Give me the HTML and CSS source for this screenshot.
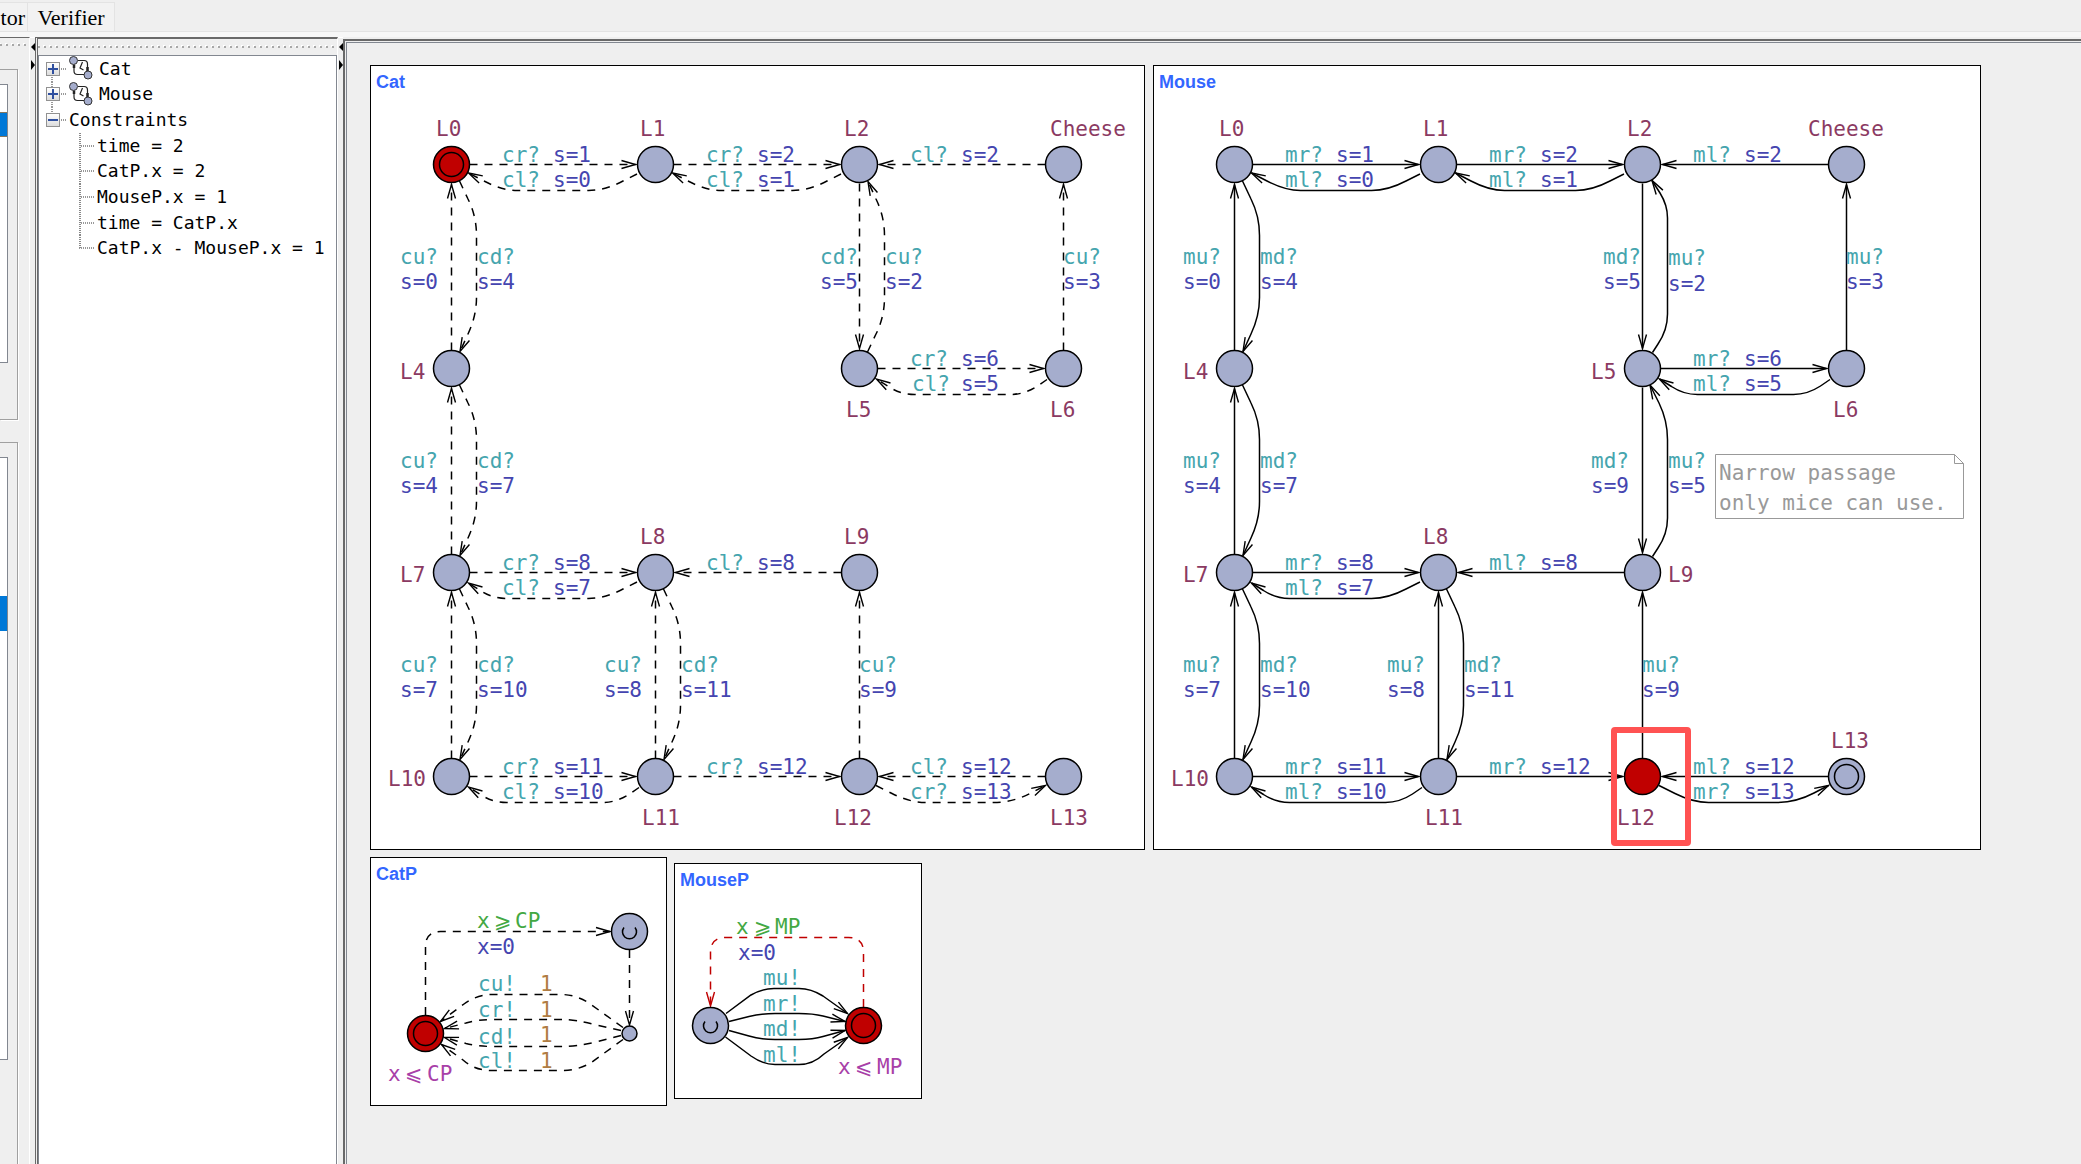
FILE: index.html
```
<!DOCTYPE html>
<html lang="en">
<head>
<meta charset="utf-8">
<title>Simulator</title>
<link rel="stylesheet" href="styles.css">
</head>
<body>
<svg class="shapes" width="0" height="0" aria-hidden="true">
  <defs>
    <marker id="head" markerUnits="userSpaceOnUse" markerWidth="18" markerHeight="12" refX="15" refY="6" orient="auto"><path d="M1 2 L15 6 L1 10" fill="none" stroke="#000" stroke-width="1.4"/></marker>
    <marker id="head-active" markerUnits="userSpaceOnUse" markerWidth="18" markerHeight="12" refX="15" refY="6" orient="auto"><path d="M1 2 L15 6 L1 10" fill="none" stroke="#c00000" stroke-width="1.4"/></marker>
    <circle id="loc" r="18"/>
    <g id="init"><circle r="18"/><circle r="12"/></g>
    <g id="urgent"><circle r="18"/><path d="M-5.5 -4 A7 7 0 1 0 5.5 -4" fill="none"/></g>
    <path id="east" d="M18 0 H184"/>
    <path id="west" d="M186 0 H20"/>
    <path id="south" d="M0 19 V184"/>
    <path id="north" d="M0 186 V20"/>
    <path id="back" d="M185.5 9.5 L171.5 16.5 Q153.5 26 137 26 H66 Q50.5 26 32.5 16.5 L17 8.5"/>
    <path id="back-short" d="M185.5 9.5 L171.5 16.5 Q153.5 26 137 26 H55 Q41 26 29 18 L17 10.5"/>
    <path id="back-tight" d="M187.5 11 L178 17.5 Q165 26 151 26 H55 Q41 26 29 18 L17 10.5"/>
    <path id="fore" d="M16.5 9 L32.5 17 Q50.5 26 66 26 H134 Q153.5 26 171.5 16.5 L186 9"/>
    <path id="bow-down" d="M8 16.5 L16.5 34.5 Q25 51.5 25 71 V133 Q25 151.5 16.5 169.5 L8.5 187"/>
    <path id="bow-up" d="M8 187.5 L16.5 169.5 Q25 152.5 25 133 V71 Q25 52 16.5 34.5 L8.5 17"/>
    <path id="bow-up-tight" d="M10 188 L15.5 179.5 Q25 165.5 25 149.5 V53.5 Q25 40.5 17.5 28.5 L9.5 16"/>
    <path id="bow-up-low" d="M10 188 L15.5 179.5 Q25 165.5 25 149.5 V71 Q25 52 16.5 34.5 L7.5 16.5"/>
    <g id="automaton">
      <path d="M9 4.500 H15 Q18.500 4.500 18.500 8 V15 M5 8 V15 Q5 18.500 8.500 18.500 H15" fill="none" stroke="#222" stroke-width="1.200"/>
      <path d="M18.500 11 V15 M5 9 V12" stroke="#222" stroke-width="2.500"/>
      <path d="M13.500 6 L11 12 L14.500 14" fill="none" stroke="#222" stroke-width="1.200"/>
      <circle cx="4.500" cy="4.500" r="4" fill="#a5adcd" stroke="#333"/>
      <circle cx="19" cy="19" r="4" fill="#a5adcd" stroke="#333"/>
    </g>
  </defs>
</svg>

<nav class="tabs">
  <button class="tab tab-cut" type="button" aria-label="Simulator">tor</button>
  <button class="tab" type="button">Verifier</button>
</nav>

<div class="workspace">
  <aside class="controls">
    <div class="grip"></div>
    <section class="group group-top"><div class="list"><div class="selected"></div></div></section>
    <section class="group group-trace"><div class="list"><div class="selected"></div></div></section>
  </aside>
  <div class="divider">
    <button class="arrow arrow-left" type="button" aria-label="Collapse controls"></button>
    <button class="arrow arrow-right" type="button" aria-label="Expand controls"></button>
  </div>
  <aside class="variables">
    <div class="grip"></div>
    <div class="tree-view">
      <ul class="tree">
        <li class="node first"><button class="toggle plus" type="button" aria-label="Expand Cat"></button><span class="stub"></span><svg class="icon" viewBox="0 0 25 25"><use href="#automaton"/></svg>Cat</li>
        <li class="node"><button class="toggle plus" type="button" aria-label="Expand Mouse"></button><span class="stub"></span><svg class="icon" viewBox="0 0 25 25"><use href="#automaton"/></svg>Mouse</li>
        <li class="node last"><button class="toggle" type="button" aria-label="Collapse Constraints"></button><span class="stub"></span>Constraints</li>
        <li class="leaf"><span class="branch"></span>time = 2</li>
        <li class="leaf"><span class="branch"></span>CatP.x = 2</li>
        <li class="leaf"><span class="branch"></span>MouseP.x = 1</li>
        <li class="leaf"><span class="branch"></span>time = CatP.x</li>
        <li class="leaf"><span class="branch branch-end"></span>CatP.x - MouseP.x = 1</li>
      </ul>
    </div>
  </aside>
  <div class="divider">
    <button class="arrow arrow-left" type="button" aria-label="Collapse variables"></button>
    <button class="arrow arrow-right" type="button" aria-label="Expand variables"></button>
  </div>

  <main class="canvas">
    <section class="window window-cat">
      <h2>Cat</h2>
      <svg viewBox="0 28 773 755" width="773" height="755">
        <g class="edges dashed" marker-end="url(#head)">
          <use href="#east" x="80.5" y="98.5"/><use href="#back" x="80.5" y="98.5"/>
          <use href="#east" x="284.5" y="98.5"/><use href="#back" x="284.5" y="98.5"/>
          <use href="#west" x="488.5" y="98.5"/>
          <use href="#north" x="80.5" y="98.5"/><use href="#bow-down" x="80.5" y="98.5"/>
          <use href="#south" x="488.5" y="98.5"/><use href="#bow-up" x="488.5" y="98.5"/>
          <use href="#north" x="692.5" y="98.5"/>
          <use href="#east" x="488.5" y="302.5"/><use href="#back-tight" x="488.5" y="302.5"/>
          <use href="#north" x="80.5" y="302.5"/><use href="#bow-down" x="80.5" y="302.5"/>
          <use href="#east" x="80.5" y="506.5"/><use href="#back-short" x="80.5" y="506.5"/>
          <use href="#west" x="284.5" y="506.5"/>
          <use href="#north" x="80.5" y="506.5"/><use href="#bow-down" x="80.5" y="506.5"/>
          <use href="#north" x="284.5" y="506.5"/><use href="#bow-down" x="284.5" y="506.5"/>
          <use href="#north" x="488.5" y="506.5"/>
          <use href="#east" x="80.5" y="710.5"/><use href="#back-tight" x="80.5" y="710.5"/>
          <use href="#east" x="284.5" y="710.5"/>
          <use href="#west" x="488.5" y="710.5"/><use href="#fore" x="488.5" y="710.5"/>
        </g>
        <g class="locations">
          <use class="active" href="#init" x="80.5" y="98.5"/><use href="#loc" x="284.5" y="98.5"/><use href="#loc" x="488.5" y="98.5"/><use href="#loc" x="692.5" y="98.5"/>
          <use href="#loc" x="80.5" y="302.5"/><use href="#loc" x="488.5" y="302.5"/><use href="#loc" x="692.5" y="302.5"/>
          <use href="#loc" x="80.5" y="506.5"/><use href="#loc" x="284.5" y="506.5"/><use href="#loc" x="488.5" y="506.5"/>
          <use href="#loc" x="80.5" y="710.5"/><use href="#loc" x="284.5" y="710.5"/><use href="#loc" x="488.5" y="710.5"/><use href="#loc" x="692.5" y="710.5"/>
        </g>
        <g class="name">
          <text x="65" y="70">L0</text><text x="269" y="70">L1</text><text x="473" y="70">L2</text><text x="679" y="70">Cheese</text>
          <text x="29" y="313">L4</text><text x="475" y="351">L5</text><text x="679" y="351">L6</text>
          <text x="29" y="516">L7</text><text x="269" y="478">L8</text><text x="473" y="478">L9</text>
          <text x="17" y="720">L10</text><text x="271" y="759">L11</text><text x="463" y="759">L12</text><text x="679" y="759">L13</text>
        </g>
        <g class="sync">
          <text x="131" y="96">cr?</text><text x="131" y="121">cl?</text><text x="335" y="96">cr?</text><text x="335" y="121">cl?</text><text x="539" y="96">cl?</text>
          <text x="29" y="198">cu?</text><text x="106" y="198">cd?</text><text x="449" y="198">cd?</text><text x="514" y="198">cu?</text><text x="692" y="198">cu?</text>
          <text x="539" y="300">cr?</text><text x="541" y="325">cl?</text>
          <text x="29" y="402">cu?</text><text x="106" y="402">cd?</text>
          <text x="131" y="504">cr?</text><text x="131" y="529">cl?</text><text x="335" y="504">cl?</text>
          <text x="29" y="606">cu?</text><text x="106" y="606">cd?</text><text x="233" y="606">cu?</text><text x="310" y="606">cd?</text><text x="488" y="606">cu?</text>
          <text x="131" y="708">cr?</text><text x="131" y="733">cl?</text><text x="335" y="708">cr?</text><text x="539" y="708">cl?</text><text x="539" y="733">cr?</text>
        </g>
        <g class="update">
          <text x="182" y="96">s=1</text><text x="182" y="121">s=0</text><text x="386" y="96">s=2</text><text x="386" y="121">s=1</text><text x="590" y="96">s=2</text>
          <text x="29" y="223">s=0</text><text x="106" y="223">s=4</text><text x="449" y="223">s=5</text><text x="514" y="223">s=2</text><text x="692" y="223">s=3</text>
          <text x="590" y="300">s=6</text><text x="590" y="325">s=5</text>
          <text x="29" y="427">s=4</text><text x="106" y="427">s=7</text>
          <text x="182" y="504">s=8</text><text x="182" y="529">s=7</text><text x="386" y="504">s=8</text>
          <text x="29" y="631">s=7</text><text x="106" y="631">s=10</text><text x="233" y="631">s=8</text><text x="310" y="631">s=11</text><text x="488" y="631">s=9</text>
          <text x="182" y="708">s=11</text><text x="182" y="733">s=10</text><text x="386" y="708">s=12</text><text x="590" y="708">s=12</text><text x="590" y="733">s=13</text>
        </g>
      </svg>
    </section>

    <section class="window window-mouse">
      <h2>Mouse</h2>
      <svg viewBox="0 28 826 755" width="826" height="755">
        <g class="edges" marker-end="url(#head)">
          <use href="#east" x="80.5" y="98.5"/><use href="#back" x="80.5" y="98.5"/>
          <use href="#east" x="284.5" y="98.5"/><use href="#back" x="284.5" y="98.5"/>
          <use href="#west" x="488.5" y="98.5"/>
          <use href="#north" x="80.5" y="98.5"/><use href="#bow-down" x="80.5" y="98.5"/>
          <use href="#south" x="488.5" y="98.5"/><use href="#bow-up-tight" x="488.5" y="98.5"/>
          <use href="#north" x="692.5" y="98.5"/>
          <use href="#east" x="488.5" y="302.5"/><use href="#back-tight" x="488.5" y="302.5"/>
          <use href="#north" x="80.5" y="302.5"/><use href="#bow-down" x="80.5" y="302.5"/>
          <use href="#south" x="488.5" y="302.5"/><use href="#bow-up-low" x="488.5" y="302.5"/>
          <use href="#east" x="80.5" y="506.5"/><use href="#back-short" x="80.5" y="506.5"/>
          <use href="#west" x="284.5" y="506.5"/>
          <use href="#north" x="80.5" y="506.5"/><use href="#bow-down" x="80.5" y="506.5"/>
          <use href="#north" x="284.5" y="506.5"/><use href="#bow-down" x="284.5" y="506.5"/>
          <use href="#north" x="488.5" y="506.5"/>
          <use href="#east" x="80.5" y="710.5"/><use href="#back-tight" x="80.5" y="710.5"/>
          <use href="#east" x="284.5" y="710.5"/>
          <use href="#west" x="488.5" y="710.5"/><use href="#fore" x="488.5" y="710.5"/>
        </g>
        <g class="locations">
          <use href="#loc" x="80.5" y="98.5"/><use href="#loc" x="284.5" y="98.5"/><use href="#loc" x="488.5" y="98.5"/><use href="#loc" x="692.5" y="98.5"/>
          <use href="#loc" x="80.5" y="302.5"/><use href="#loc" x="488.5" y="302.5"/><use href="#loc" x="692.5" y="302.5"/>
          <use href="#loc" x="80.5" y="506.5"/><use href="#loc" x="284.5" y="506.5"/><use href="#loc" x="488.5" y="506.5"/>
          <use href="#loc" x="80.5" y="710.5"/><use href="#loc" x="284.5" y="710.5"/><use class="active" href="#loc" x="488.5" y="710.5"/><use href="#init" x="692.5" y="710.5"/>
        </g>
        <g class="name">
          <text x="65" y="70">L0</text><text x="269" y="70">L1</text><text x="473" y="70">L2</text><text x="654" y="70">Cheese</text>
          <text x="29" y="313">L4</text><text x="437" y="313">L5</text><text x="679" y="351">L6</text>
          <text x="29" y="516">L7</text><text x="269" y="478">L8</text><text x="514" y="516">L9</text>
          <text x="17" y="720">L10</text><text x="271" y="759">L11</text><text x="463" y="759">L12</text><text x="677" y="682">L13</text>
        </g>
        <g class="sync">
          <text x="131" y="96">mr?</text><text x="131" y="121">ml?</text><text x="335" y="96">mr?</text><text x="335" y="121">ml?</text><text x="539" y="96">ml?</text>
          <text x="29" y="198">mu?</text><text x="106" y="198">md?</text><text x="449" y="198">md?</text><text x="514" y="199">mu?</text><text x="692" y="198">mu?</text>
          <text x="539" y="300">mr?</text><text x="539" y="325">ml?</text>
          <text x="29" y="402">mu?</text><text x="106" y="402">md?</text><text x="437" y="402">md?</text><text x="514" y="402">mu?</text>
          <text x="131" y="504">mr?</text><text x="131" y="529">ml?</text><text x="335" y="504">ml?</text>
          <text x="29" y="606">mu?</text><text x="106" y="606">md?</text><text x="233" y="606">mu?</text><text x="310" y="606">md?</text><text x="488" y="606">mu?</text>
          <text x="131" y="708">mr?</text><text x="131" y="733">ml?</text><text x="335" y="708">mr?</text><text x="539" y="708">ml?</text><text x="539" y="733">mr?</text>
        </g>
        <g class="update">
          <text x="182" y="96">s=1</text><text x="182" y="121">s=0</text><text x="386" y="96">s=2</text><text x="386" y="121">s=1</text><text x="590" y="96">s=2</text>
          <text x="29" y="223">s=0</text><text x="106" y="223">s=4</text><text x="449" y="223">s=5</text><text x="514" y="225">s=2</text><text x="692" y="223">s=3</text>
          <text x="590" y="300">s=6</text><text x="590" y="325">s=5</text>
          <text x="29" y="427">s=4</text><text x="106" y="427">s=7</text><text x="437" y="427">s=9</text><text x="514" y="427">s=5</text>
          <text x="182" y="504">s=8</text><text x="182" y="529">s=7</text><text x="386" y="504">s=8</text>
          <text x="29" y="631">s=7</text><text x="106" y="631">s=10</text><text x="233" y="631">s=8</text><text x="310" y="631">s=11</text><text x="488" y="631">s=9</text>
          <text x="182" y="708">s=11</text><text x="182" y="733">s=10</text><text x="386" y="708">s=12</text><text x="590" y="708">s=12</text><text x="590" y="733">s=13</text>
        </g>
        <g class="note">
          <path d="M800.500 388.500 H561.500 V452.500 H809.500 V397.500 L800.500 388.500 V397.500 H809.500"/>
          <text x="565" y="414">Narrow passage</text>
          <text x="565" y="444">only mice can use.</text>
        </g>
        <rect class="highlight" x="460" y="664" width="74" height="113" rx="1"/>
      </svg>
    </section>

    <section class="window window-catp">
      <h2>CatP</h2>
      <svg viewBox="0 28 295 219" width="295" height="219">
        <g class="edges dashed" marker-end="url(#head)">
          <path d="M54.500 157 V88.500 Q54.500 73.500 69.500 73.500 H239"/>
          <path d="M258.500 92 V167"/>
          <path d="M252 169.500 L220 146.500 Q206 136.500 190 136.500 H122 Q106 136.500 93 146 L69.500 163.500"/>
          <path d="M250 172.500 L225 167 Q205 161.500 190 161.500 H122 Q107 161.500 95 165 L73.500 170.500"/>
          <path d="M250 177.500 L225 184 Q205 188.500 190 188.500 H122 Q107 188.500 95 185.500 L73.500 179.500"/>
          <path d="M252 181.500 L221 204 Q208 212.500 190 212.500 H120 Q104 212.500 92 202 L70.500 186.500"/>
        </g>
        <g class="locations">
          <use href="#urgent" x="258.5" y="73.5"/><circle cx="258.5" cy="175.5" r="7.5"/><use class="active" href="#init" x="54.5" y="175.5"/>
        </g>
        <text class="guard" y="70"><tspan x="106">x</tspan><tspan class="sign" x="123">⩾</tspan><tspan x="144">CP</tspan></text>
        <text class="update" x="106" y="96">x=0</text>
        <g class="sync"><text x="107" y="133">cu!</text><text x="107" y="159">cr!</text><text x="107" y="186">cd!</text><text x="107" y="210">cl!</text></g>
        <g class="weight"><text x="169" y="133">1</text><text x="169" y="159">1</text><text x="169" y="184">1</text><text x="169" y="210">1</text></g>
        <text class="invariant" y="223"><tspan x="17">x</tspan><tspan class="sign" x="34">⩽</tspan><tspan x="56">CP</tspan></text>
      </svg>
    </section>

    <section class="window window-mousep">
      <h2>MouseP</h2>
      <svg viewBox="0 28 246 206" width="246" height="206">
        <g class="edges" marker-end="url(#head)">
          <path d="M51 149.500 L76 131 Q87 124.500 99 124.500 H124 Q136 124.500 148 132 L172.500 149.500"/>
          <path d="M54 157.500 L74 152.500 Q85 149.500 100 149.500 H124 Q138 149.500 148 152 L170 157.500"/>
          <path d="M54 166.500 L74 172 Q85 175.500 100 175.500 H124 Q138 175.500 148 172.500 L170 166.500"/>
          <path d="M50.500 173 L76 192 Q88 200.500 100 200.500 H124 Q138 200.500 149 190 L172.500 173.500"/>
        </g>
        <g class="edges dashed fired" marker-end="url(#head-active)">
          <path d="M188.500 143 V88.500 Q188.500 73.500 173.500 73.500 H50.500 Q35.500 73.500 35.500 88.500 V142"/>
        </g>
        <g class="locations">
          <use href="#urgent" x="35.5" y="161.5"/><use class="active" href="#init" x="188.5" y="161.5"/>
        </g>
        <text class="guard" y="70"><tspan x="61">x</tspan><tspan class="sign" x="79">⩾</tspan><tspan x="100">MP</tspan></text>
        <text class="update" x="63" y="96">x=0</text>
        <g class="sync"><text x="88" y="121">mu!</text><text x="88" y="147">mr!</text><text x="88" y="172">md!</text><text x="88" y="198">ml!</text></g>
        <text class="invariant" y="210"><tspan x="163">x</tspan><tspan class="sign" x="180">⩽</tspan><tspan x="202">MP</tspan></text>
      </svg>
    </section>
  </main>
</div>
</body>
</html>
```
FILE: styles.css
```
* { box-sizing: border-box; }

body {
  margin: 0;
  min-height: 100vh;
  display: flex;
  flex-direction: column;
  background: #efefef;
  overflow: hidden;
  color: #000;
  font-family: "DejaVu Sans Mono", monospace;
}

button { padding: 0; border: 0; background: none; }
.shapes { position: absolute; }

/* Tab strip */
.tabs {
  display: flex;
  height: 37px;
  padding-top: 2px;
  background: linear-gradient(#efefef 31px, #e3e3e3 31px, #e3e3e3 32px, #f7f7f7 32px);
}
.tab {
  height: 29px;
  width: 87px;
  border: 1px solid #e3e3e3;
  border-left: 0;
  border-bottom: 0;
  background: #f2f2f2;
  font: 22px/30px "Liberation Serif", serif;
  text-align: center;
}
.tab-cut {
  width: 28px;
  padding-right: 2px;
  text-align: right;
}

.workspace { flex: 1; display: flex; }

/* Left controls, cut off by the window edge */
.controls {
  width: 30px;
  display: flex;
  flex-direction: column;
  border-top: 1px solid #696969;
  border-right: 1px solid #fff;
}
.grip {
  flex: none;
  height: 15px;
  margin-top: 1px;
  background:
    conic-gradient(from 270deg at 2px 2px, #a8a8a8 90deg, transparent 0) 0 6px / 6px 9px repeat-x,
    conic-gradient(from 270deg at 2px 2px, #fff 90deg, transparent 0) 5px 5px / 6px 9px repeat-x;
}
.controls .grip { margin-top: 0; margin-right: 2px; }
.group {
  margin-right: 11px;
  padding-right: 9px;
  border: 1px solid #a0a0a0;
  border-left: 0;
  box-shadow: 1px 1px #fff;
}
.group-top { flex: none; height: 351px; margin-top: 16px; padding-top: 14px; }
.group-trace { flex: 1; margin-top: 22px; padding-top: 14px; border-bottom: 0; }
.list {
  border: 1px solid #828790;
  border-left: 0;
  background: #fff;
}
.group-top .list { height: 279px; padding-top: 27px; }
.group-trace .list { height: 603px; padding-top: 138px; }
.selected { height: 35px; background: #0078d7; }
.group-top .selected { height: 25px; border: solid #87775d; border-width: 1px 0; }

/* Split pane dividers */
.divider {
  flex: none;
  width: 5px;
  display: flex;
  flex-direction: column;
  gap: 8px;
  padding: 4px 0 0 1px;
  border-top: 1px solid #fff;
}
.arrow { width: 4px; height: 10px; background: #000; }
.arrow-left { clip-path: polygon(100% 10%, 0 50%, 100% 90%); }
.arrow-right { clip-path: polygon(0 0, 100% 50%, 0 100%); }

/* Variables */
.variables {
  flex: none;
  width: 303px;
  display: flex;
  flex-direction: column;
  border-top: 2px solid #696969;
  border-left: 3px double #696969;
  border-right: 1px solid #fff;
}
.tree-view {
  flex: 1;
  border: 1px solid #828790;
  border-bottom: 0;
  background: #fff;
}
.tree {
  display: grid;
  grid-template-rows: repeat(8, minmax(0, 1fr));
  height: 205px;
  margin: 0;
  padding: 0;
  list-style: none;
  font-size: 18px;
  line-height: 24px;
  white-space: pre;
}
.node, .leaf { display: flex; align-items: center; }
.node { padding-left: 7px; background: repeating-linear-gradient(#999 0 1px, #fff 1px 2px) 12px 0 / 2px 100% no-repeat; }
.node.first { background-size: 2px 50%; background-position: 12px 100%; }
.node.last { background-size: 2px 50%; }
.toggle {
  width: 14px;
  height: 14px;
  border: 1px solid #919191;
  background:
    linear-gradient(#2f4f9f, #2f4f9f) center / 10px 2px no-repeat,
    linear-gradient(#fff, #dcdcdc);
}
.toggle.plus {
  background:
    linear-gradient(#2f4f9f, #2f4f9f) center / 10px 2px no-repeat,
    linear-gradient(#2f4f9f, #2f4f9f) center / 2px 10px no-repeat,
    linear-gradient(#fff, #dcdcdc);
}
.stub { width: 6px; height: 2px; margin: 0 2px 0 1px; background: repeating-linear-gradient(90deg, #999 0 1px, #fff 1px 2px); }
.icon { width: 25px; height: 25px; margin-right: 5px; }
.leaf { padding-left: 40px; }
.branch {
  width: 16px;
  height: 100%;
  margin-right: 2px;
  background:
    repeating-linear-gradient(#888 0 1px, #fff 1px 2px) 0 0 / 2px 100% no-repeat,
    repeating-linear-gradient(90deg, #999 0 1px, #fff 1px 2px) 0 50% / 100% 2px no-repeat;
}
.branch-end { background-size: 2px 50%, 100% 2px; }

/* Automata */
.canvas {
  position: relative;
  flex: 1;
  margin-top: 2px;
  border-top: 2px solid #696969;
  border-left: 2px solid #696969;
  box-shadow: inset 1px 1px #efefef, inset 2px 2px #828790;
}
.window {
  position: absolute;
  border: 1px solid #000;
  background: #fff;
}
.window-cat { left: 25px; top: 24px; }
.window-mouse { left: 808px; top: 24px; }
.window-catp { left: 25px; top: 816px; }
.window-mousep { left: 329px; top: 822px; }
.window h2 {
  margin: 0;
  padding: 5px 5px 1px;
  color: #3366ff;
  font: bold 18px/22px "Liberation Sans", Arial, sans-serif;
}
.window svg { display: block; font-size: 21px; }

.edges { fill: none; stroke: #000; stroke-width: 1.5px; }
.dashed { stroke-dasharray: 8 7; }
.fired { stroke: #c00000; }
.locations { fill: #a5adcd; stroke: #000; stroke-width: 1.5px; }
.locations .active { fill: #c00000; }
.name { fill: #8b3a62; }
.sync { fill: #46a5ae; }
.update { fill: #4545b0; }
.guard { fill: #43a843; }
.invariant { fill: #a840a8; }
.weight { fill: #b07c42; }
.note { fill: #999; }
.note path { fill: none; stroke: #999; }
.highlight { fill: none; stroke: #ff5252; stroke-width: 6px; }
.sign { font-family: "DejaVu Sans", sans-serif; }
```
